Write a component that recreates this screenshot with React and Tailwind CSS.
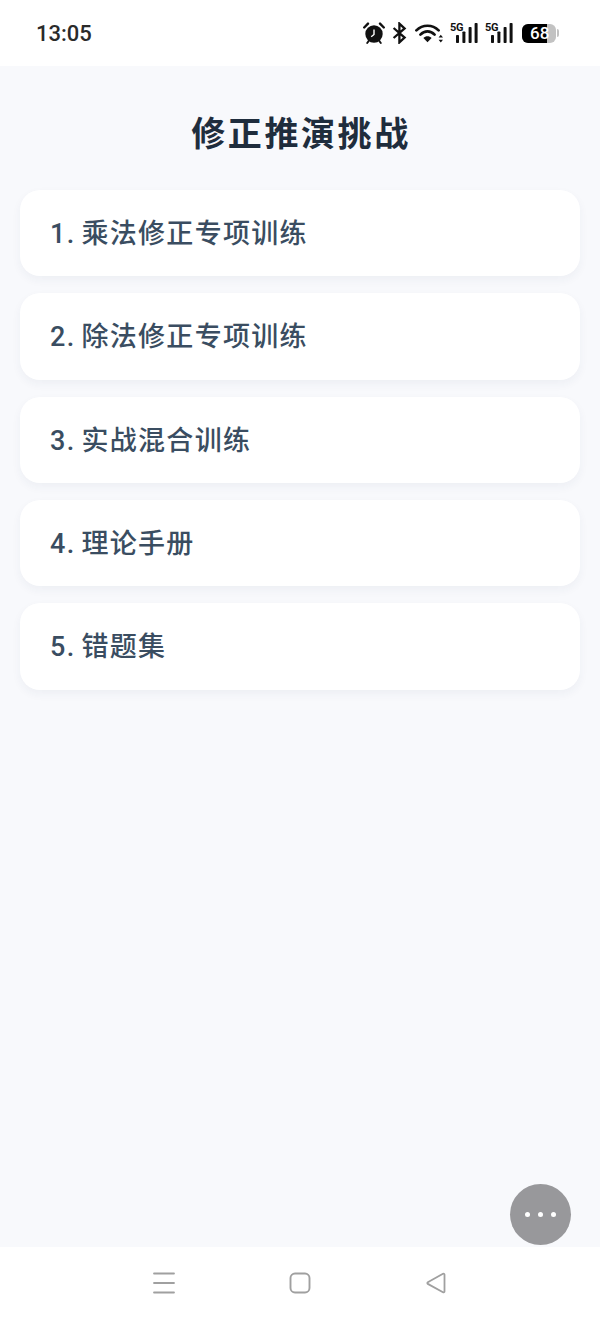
const items = ["1. 乘法修正专项训练", "2. 除法修正专项训练", "3. 实战混合训练", "4. 理论手册", "5. 错题集"];

function Alarm() {
  return (
    <svg width="22" height="22" viewBox="0 0 22 22" className="text-[#111]">
      <circle cx="11" cy="12" r="8.7" fill="currentColor" />
      <path d="M11 7.5v5l-2.8 2.2" fill="none" stroke="#fff" strokeWidth="1.4" />
      <path d="M1.2 5.5 5 1.6M20.8 5.5 17 1.6" stroke="currentColor" strokeWidth="2.4" strokeLinecap="round" />
      <path d="M5.6 19.2 4.2 21M16.4 19.2 17.8 21" stroke="currentColor" strokeWidth="1.9" strokeLinecap="round" />
    </svg>
  );
}
function Bluetooth() {
  return (
    <svg width="15" height="22" viewBox="0 0 15 22">
      <path d="M1.6 6 12.6 15.6 7.4 20.4V1.6L12.6 6.4 1.6 16" fill="none" stroke="#111" strokeWidth="2.3" />
    </svg>
  );
}
function Wifi() {
  return (
    <svg width="28" height="20" viewBox="0 0 28 20">
      <path d="M1.4 7.4C7.6 1.2 17.4 1.2 23.6 7.4" fill="none" stroke="#111" strokeWidth="2.7" strokeLinecap="round" />
      <path d="M5.4 11.6C9.6 7.4 15.4 7.4 19.6 11.6" fill="none" stroke="#111" strokeWidth="2.7" strokeLinecap="round" />
      <path d="M8.4 15c2.2-2.2 6-2.2 8.2 0l-4.1 4.2z" fill="#111" />
      <path d="M25.8 11.8 28 14.6h-4.4zM25.8 19.6l-2.2-2.8H28z" fill="#111" />
    </svg>
  );
}
function Signal() {
  return (
    <div className="relative h-[22px] w-[28px]">
      <span className="absolute left-0 top-0 text-[11px] leading-[11px] font-bold text-[#111] tracking-[-0.4px] font-['Roboto',sans-serif]">5G</span>
      <svg width="28" height="22" viewBox="0 0 28 22" className="absolute left-0 top-0">
        <rect x="6" y="13" width="3" height="8" rx="0.8" fill="#111" />
        <rect x="12.4" y="9.5" width="3" height="11.5" rx="0.8" fill="#111" />
        <rect x="18.6" y="5" width="3" height="16" rx="0.8" fill="#111" />
        <rect x="24.6" y="1" width="3" height="20" rx="0.8" fill="#111" />
      </svg>
    </div>
  );
}
function Battery() {
  return (
    <div className="flex items-center">
      <div className="relative flex h-[19px] w-[34px] items-center overflow-hidden rounded-[6px] bg-[#c2c2c2]">
        <div className="h-full w-[25px] bg-black" />
        <span className="absolute left-[8px] text-[17px] leading-[19px] font-medium text-white font-['Roboto',sans-serif]">68</span>
      </div>
      <div className="ml-[1px] h-[8px] w-[2px] rounded-r-sm bg-[#c2c2c2]" />
    </div>
  );
}

export default function App() {
  return (
    <div className="relative flex h-[1320px] w-[600px] flex-col overflow-hidden bg-[#f8f9fc] font-['Roboto','Noto_Sans_CJK_SC',sans-serif]">
      <div className="flex h-[66px] shrink-0 items-center justify-between bg-white pl-[36px] pr-[41px]">
        <span className="text-[22px] font-medium text-[#2a2a2a] font-['Roboto',sans-serif]">13:05</span>
        <div className="flex items-center">
          <Alarm />
          <div className="ml-[7px]"><Bluetooth /></div>
          <div className="ml-[8px]"><Wifi /></div>
          <div className="ml-[7px]"><Signal /></div>
          <div className="ml-[7px]"><Signal /></div>
          <div className="ml-[9px]"><Battery /></div>
        </div>
      </div>

      <main className="flex flex-1 flex-col px-[20px]">
        <h1 className="mt-[45px] mb-[33px] pl-[2px] text-center text-[34px] leading-[46px] font-bold tracking-[2.6px] text-[#1f2d3d]">修正推演挑战</h1>
        <div className="flex flex-col gap-[17px]">
          {items.map((t) => (
            <div key={t} className="flex h-[86.33px] items-center rounded-[20px] bg-white pl-[30px] pt-[2px] text-[27px] font-medium tracking-[1.3px] [word-spacing:-2px] text-[#3a4d61] shadow-[0_4px_10px_rgba(30,50,90,0.05)]">
              {t}
            </div>
          ))}
        </div>
      </main>

      <div className="absolute left-[510px] top-[1184px] flex h-[61px] w-[61px] items-center justify-center gap-[7.5px] rounded-full bg-[#98989b]">
        <span className="h-[5.5px] w-[5.5px] rounded-full bg-white" />
        <span className="h-[5.5px] w-[5.5px] rounded-full bg-white" />
        <span className="h-[5.5px] w-[5.5px] rounded-full bg-white" />
      </div>

      <nav className="flex h-[73px] shrink-0 items-center justify-center gap-[104px] bg-white pb-[1px] pr-[1px]">
        <svg width="32" height="32" viewBox="0 0 32 32"><path d="M6 6.5h20M6 16h20M6 25.5h20" stroke="#a0a0a0" strokeWidth="1.8" strokeLinecap="round" /></svg>
        <svg width="32" height="32" viewBox="0 0 32 32"><rect x="6.5" y="6.5" width="19" height="19" rx="4.5" fill="none" stroke="#a0a0a0" strokeWidth="1.9" /></svg>
        <svg width="32" height="32" viewBox="0 0 32 32"><path d="M24.5 7.5v17a1 1 0 0 1-1.5.8L7.8 16.9a1 1 0 0 1 0-1.7L23 6.7a1 1 0 0 1 1.5.8z" fill="none" stroke="#a0a0a0" strokeWidth="1.8" /></svg>
      </nav>
    </div>
  );
}
